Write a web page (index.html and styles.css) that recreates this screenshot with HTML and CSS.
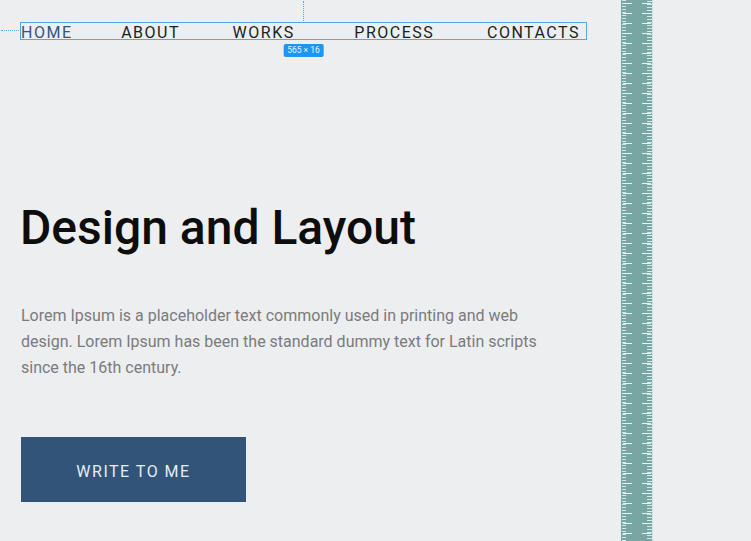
FILE: index.html
```html
<!DOCTYPE html>
<html lang="en">
<head>
<meta charset="utf-8">
<title>Design and Layout</title>
<link rel="stylesheet" href="styles.css">
</head>
<body>
<div class="page">
  <main class="main">
    <nav class="nav">
      <span class="guide guide-v"></span>
      <span class="guide guide-h"></span>
      <a class="nav-link active" href="#">HOME</a>
      <a class="nav-link" href="#">ABOUT</a>
      <a class="nav-link" href="#">WORKS</a>
      <a class="nav-link" href="#">PROCESS</a>
      <a class="nav-link" href="#">CONTACTS</a>
      <span class="badge">565 × 16</span>
    </nav>
    <h1 class="title">Design and Layout</h1>
    <p class="lead">Lorem Ipsum is a placeholder text commonly used in printing and web design. Lorem Ipsum has been the standard dummy text for Latin scripts since the 16th century.</p>
    <a class="btn" href="#">WRITE TO ME</a>
  </main>
  <div class="ruler"></div>
  <div class="rest"></div>
</div>
</body>
</html>
```
FILE: styles.css
```css
html, body {
  margin: 0;
  padding: 0;
  background: #edeef0;
  font-family: Roboto, "Liberation Sans", sans-serif;
  height: 100%;
}

.page {
  display: flex;
  height: 541px;
  overflow: hidden;
}

.main {
  width: 621px;
  flex: none;
  padding: 22px 0 0 20px;
  box-sizing: border-box;
}

.nav {
  position: relative;
  width: 559px;
  height: 16px;
  border: 1px solid #4fa9ef;
  display: flex;
  justify-content: space-between;
  align-items: center;
  padding-right: 6px;
}

.nav-link {
  font-size: 16px;
  line-height: 16px;
  letter-spacing: 1.5px;
  color: #1c1e20;
  text-decoration: none;
  margin-top: 3px;
}

.nav-link:nth-child(4) { margin-left: -4px; }
.nav-link:nth-child(6) { margin-left: 7px; }

.nav-link.active {
  color: #34557a;
}

.guide {
  position: absolute;
}

.guide-v {
  left: 282px;
  bottom: 100%;
  height: 22px;
  border-left: 1px dotted #4fa9ef;
}

.guide-h {
  right: 100%;
  top: 7px;
  width: 20px;
  border-top: 1px dotted #4fa9ef;
}

.badge {
  position: absolute;
  top: 21px;
  left: 282.5px;
  transform: translateX(-50%);
  background: #1f95f2;
  color: #e8f4ff;
  font-size: 8.5px;
  line-height: 13px;
  padding: 0 4px;
  border-radius: 2px;
  white-space: nowrap;
}

.title {
  margin: 159px 0 0 0;
  font-size: 48px;
  line-height: 58px;
  font-weight: 500;
  color: #0d0d0d;
  letter-spacing: 0;
}

.lead {
  margin: 46px 0 0 1px;
  width: 530px;
  font-size: 16px;
  line-height: 26px;
  color: #7a7b7d;
}

.btn {
  display: flex;
  align-items: center;
  justify-content: center;
  box-sizing: border-box;
  margin: 56px 0 0 1px;
  width: 225px;
  height: 65px;
  padding-top: 4px;
  background: #325478;
  color: #e6ecf2;
  font-size: 16px;
  letter-spacing: 1.5px;
  text-decoration: none;
}

.ruler {
  width: 32px;
  flex: none;
  height: 100%;
  background:
    linear-gradient(to right, #cfe5e3 0 1px, transparent 1px) 31px 0 / 1px 100% no-repeat,
    linear-gradient(to bottom, #e4f3f1 0 1px, transparent 1px) 2px 3px / 9px 10px repeat-y,
    linear-gradient(to bottom, #e4f3f1 0 1px, transparent 1px) 21px 3px / 9px 10px repeat-y,
    linear-gradient(to bottom, rgba(230,244,242,0.85) 0 1px, transparent 1px) 1px 0 / 4px 3px repeat-y,
    linear-gradient(to bottom, rgba(230,244,242,0.85) 0 1px, transparent 1px) 26px 1px / 5px 3px repeat-y,
    #77a6a3;
}

.rest {
  flex: 1;
}
```
